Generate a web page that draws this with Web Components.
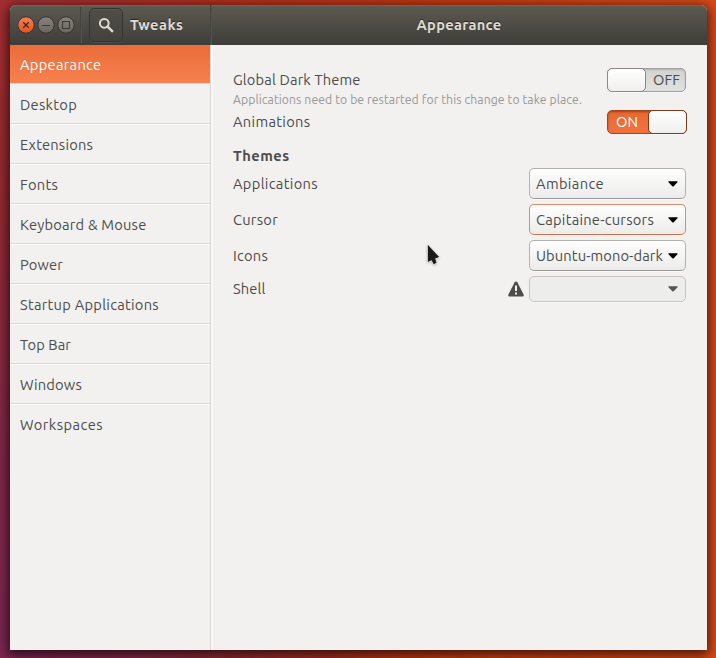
<!DOCTYPE html>
<html lang="en">
<head>
<meta charset="utf-8">
<title>Tweaks</title>
<style>
html,body{margin:0;height:100%;overflow:hidden}
body{font:14.667px/20px Ubuntu,"Noto Sans",sans-serif;color:#4c4c4c}
</style>
</head>
<body>
<tweaks-desktop>
  <tweaks-window>
    <tweaks-header slot="header"></tweaks-header>
    <tweaks-sidebar slot="sidebar">
      <nav-row selected><fit-text w="81.500">Appearance</fit-text></nav-row>
      <nav-row><fit-text w="57">Desktop</fit-text></nav-row>
      <nav-row><fit-text w="73">Extensions</fit-text></nav-row>
      <nav-row><fit-text w="38">Fonts</fit-text></nav-row>
      <nav-row><fit-text w="126.500">Keyboard &amp; Mouse</fit-text></nav-row>
      <nav-row><fit-text w="43">Power</fit-text></nav-row>
      <nav-row><fit-text w="139">Startup Applications</fit-text></nav-row>
      <nav-row><fit-text w="51">Top Bar</fit-text></nav-row>
      <nav-row><fit-text w="62">Windows</fit-text></nav-row>
      <nav-row last><fit-text w="83">Workspaces</fit-text></nav-row>
    </tweaks-sidebar>
    <setting-row style="--h:24px"><fit-text w="127.500">Global Dark Theme</fit-text><toggle-switch slot="control"></toggle-switch></setting-row>
    <setting-note><fit-text w="349">Applications need to be restarted for this change to take place.</fit-text></setting-note>
    <setting-row style="--h:24px"><fit-text w="77.500">Animations</fit-text><toggle-switch slot="control" on></toggle-switch></setting-row>
    <section-title><fit-text w="56.5">Themes</fit-text></section-title>
    <setting-row style="--h:31px;--gap:5px"><fit-text w="85">Applications</fit-text><combo-box slot="control"><fit-text w="68">Ambiance</fit-text></combo-box></setting-row>
    <setting-row style="--h:31px;--gap:5px"><fit-text w="45">Cursor</fit-text><combo-box slot="control" focused><fit-text w="118">Capitaine-cursors</fit-text></combo-box></setting-row>
    <setting-row style="--h:31px;--gap:5px"><fit-text w="35">Icons</fit-text><combo-box slot="control"><fit-text w="127">Ubuntu-mono-dark</fit-text></combo-box></setting-row>
    <setting-row style="--h:26px"><fit-text w="32.5">Shell</fit-text><warning-icon slot="control"></warning-icon><combo-box slot="control" disabled></combo-box></setting-row>
  </tweaks-window>
  <mouse-pointer></mouse-pointer>
</tweaks-desktop>

<script>
function define(name, html, ready) {
  customElements.define(name, class extends HTMLElement {
    constructor() {
      super();
      this.attachShadow({mode: 'open'}).innerHTML = html;
    }
    connectedCallback() { if (ready) ready(this); }
  });
}

define('tweaks-desktop', `<style>
  :host{display:block;box-sizing:border-box;position:relative;width:716px;height:658px;padding:5px 9px 8px 10px;
    background:
      radial-gradient(ellipse 420px 760px at 0 100%,#7c2650 0,#822848 30%,rgba(146,40,46,.75) 65%,transparent 100%),
      linear-gradient(to right,#ab3034 0,#b2301f 30%,#c23a12 60%,#d84a18 100%)}
</style><slot></slot>`);

define('tweaks-window', `<style>
  :host{display:grid;grid-template:40px 1fr / 200px 1fr;width:697px;height:645px;border-radius:6px 6px 0 0;
    box-shadow:0 3px 12px 2px rgba(0,0,0,.68);background:#f2f1f0;}
  slot[name=header]{grid-column:1 / 3;display:block}
  main{border-left:1px solid #d9d8d7;box-shadow:inset 2px 0 #f8f7f6;padding:23px 21px 0 22px}
</style>
<slot name="header"></slot><slot name="sidebar"></slot><main><slot></slot></main>`);

define('tweaks-header', `<style>
  :host{display:grid;grid-template-columns:200px 1fr;height:40px;box-sizing:border-box;border-radius:6px 6px 0 0;
    background:linear-gradient(#5d5a51,#3e3d39);box-shadow:inset 0 1px #696760;
    color:#dfdbd2;font-weight:bold;text-shadow:0 -1px rgba(0,0,0,.55)}
  .left{display:flex;align-items:center;box-sizing:border-box;padding-left:8px}
  .left svg{display:block;flex:none}
  .sep{width:1px;height:36px;margin-left:2px;background:#43423d;box-shadow:1px 0 #575550}
  .search{box-sizing:border-box;width:34px;height:34px;margin:0 7px 0 8px;border:1px solid #35342f;border-radius:5px;
    background:linear-gradient(#504e47,#43423d);box-shadow:0 1px rgba(255,255,255,.08),inset 0 1px rgba(255,255,255,.05);display:grid;place-items:center}
  .right{border-left:1px solid #44433e;box-shadow:inset 1px 0 #555349;display:flex;align-items:center;justify-content:center}
</style>
<div class="left">
  <svg width="60" height="20" viewBox="0 0 60 20">
    <defs>
      <linearGradient id="o" x2="0" y2="1"><stop stop-color="#f78153"/><stop offset="1" stop-color="#e8521d"/></linearGradient>
      <linearGradient id="g" x2="0" y2="1"><stop stop-color="#85837b"/><stop offset="1" stop-color="#696760"/></linearGradient>
    </defs>
    <g stroke="#34332e">
      <circle cx="8" cy="10" r="8.2" fill="url(#o)"/><circle cx="28" cy="10" r="8.2" fill="url(#g)"/><circle cx="48" cy="10" r="8.2" fill="url(#g)"/>
    </g>
    <path d="M5.2 7.2l5.6 5.6M10.8 7.2l-5.6 5.6" stroke="#3b2a22" stroke-width="1.3"/>
    <path d="M24 10.5h8M44.5 6.5h7v7h-7z" fill="none" stroke="#3b3a36" stroke-width="1.1"/>
  </svg>
  <span class="sep"></span>
  <span class="search"><svg width="16" height="16" viewBox="0 0 16 16"><circle cx="6.3" cy="6.3" r="4.4" fill="none" stroke="#dfdbd2" stroke-width="2"/><path d="M9.6 9.6l4.6 4.6" stroke="#dfdbd2" stroke-width="2.4" stroke-linecap="round"/></svg></span>
  <fit-text w="53.5">Tweaks</fit-text>
</div>
<div class="right"><fit-text w="85">Appearance</fit-text></div>`);

define('tweaks-sidebar', `<style>
  :host{display:flex;flex-direction:column;background:#f2f1f0}
</style><slot></slot>`);

define('nav-row', `<style>
  :host{display:block;box-sizing:border-box;height:40px;padding:11px 10px 0;border-bottom:1px solid #dcdbda;box-shadow:inset 0 1px #fbfbfa}
  :host([selected]){height:39px;padding-top:10px;color:#fff;background:linear-gradient(#eb6c3a,#f6824f);background-clip:padding-box;box-shadow:inset 0 1px #e4703f}
  :host([last]){border-bottom:0}
</style><slot></slot>`);

define('setting-row', `<style>
  :host{display:flex;align-items:center;justify-content:space-between;height:var(--h);margin-bottom:var(--gap,0)}
  .controls{display:flex;align-items:center;gap:5px}
</style><slot></slot><div class="controls"><slot name="control"></slot></div>`);

define('setting-note', `<style>
  :host{display:block;height:18px;font-size:12.2px;line-height:15px;color:#989795}
</style><slot></slot>`);

define('section-title', `<style>
  :host{display:block;box-sizing:border-box;height:34px;padding-top:12px;font-weight:bold}
</style><slot></slot>`);

define('toggle-switch', `<style>
  :host{display:flex;box-sizing:border-box;width:79px;height:24px;border:1px solid #a09f9d;border-radius:5px;
    background:linear-gradient(#d2d2d1,#e2e2e1);box-shadow:inset 0 1px 2px rgba(0,0,0,.15),0 1px #fafafa}
  .knob{box-sizing:border-box;width:39px;height:24px;margin:-1px;border:1px solid #8a8987;border-radius:5px;background:linear-gradient(#fff,#f0efee)}
  .label{flex:1;display:flex;align-items:center;justify-content:center;padding-left:3px}
  :host([on]){width:80px;margin-right:-1px;flex-direction:row-reverse;border-color:#a5461f;background:linear-gradient(#e86730,#f0733f);
    box-shadow:inset 0 1px 2px rgba(110,30,0,.55),0 1px #fafafa;color:#fff}
  :host([on]) .knob{border-color:#833719}
  :host([on]) .label{padding:0 3px 0 0}
</style><span class="knob"></span><span class="label"></span>`, el => {
  const on = el.hasAttribute('on');
  el.shadowRoot.querySelector('.label').innerHTML = on ? '<fit-text w="22">ON</fit-text>' : '<fit-text w="27">OFF</fit-text>';
});

define('combo-box', `<style>
  :host{display:flex;align-items:center;justify-content:space-between;box-sizing:border-box;width:157px;height:31px;padding:0 7px 0 6px;
    border:1px solid #b3b2b0;border-bottom-color:#9b9a98;border-radius:5px;background:linear-gradient(#fefefe,#ececeb);box-shadow:0 1px #fafafa}
  :host([focused]){border-color:#df8a68;border-bottom-color:#cf7048}
  :host([disabled]){height:26px;border-color:#c6c5c4;background:#ededec;color:#555}
  svg{display:block;margin-left:auto;color:#000}
  :host([disabled]) svg{color:#555}
</style><slot></slot><svg width="10" height="6" viewBox="0 0 10 6"><path d="M.9.3h8.200q1 .2.4 1L5.700 5.2q-.7.6-1.400 0L.5 1.300q-.6-.8.4-1z" fill="currentColor"/></svg>`);

define('warning-icon', `<style>
  :host{display:block;width:16px;height:16px}
  svg{display:block}
</style><svg width="16" height="16" viewBox="0 0 16 16"><path d="M8 .4q.8 0 1.3.9l6.200 12q.8 2-.9 2.200H1.400Q-.3 15.300.5 13.300l6.200-12Q7.200.4 8 .4z" fill="#4c4c4c"/><path d="M7 4.500h2v5.500H7zM7 11.500h2v2H7z" fill="#f2f1f0"/></svg>`);

define('mouse-pointer', `<style>
  :host{position:absolute;left:425px;top:242px;width:18px;height:27px}
  svg{display:block;filter:drop-shadow(0 1px 1px rgba(0,0,0,.25))}
</style><svg width="18" height="27" viewBox="0 0 18 27"><path d="M2.800 2.800v17.200l3.800-1.800 2 4 3-1.400-1.400-4.200 4-1.500z" fill="#1a1a1a" stroke="#fff" stroke-width="1" paint-order="stroke"/></svg>`);

/* A label tracked out or in so that its text takes up w pixels.
   Defined last: it measures itself in the font its containers give it. */
define('fit-text', `<style>
  :host{display:inline-block;white-space:nowrap}
</style><slot></slot>`, el => {
  const chars = el.textContent.length;
  const natural = el.getBoundingClientRect().width;
  el.style.letterSpacing = ((+el.getAttribute('w') - natural) / chars) + 'px';
});
</script>
</body>
</html>
